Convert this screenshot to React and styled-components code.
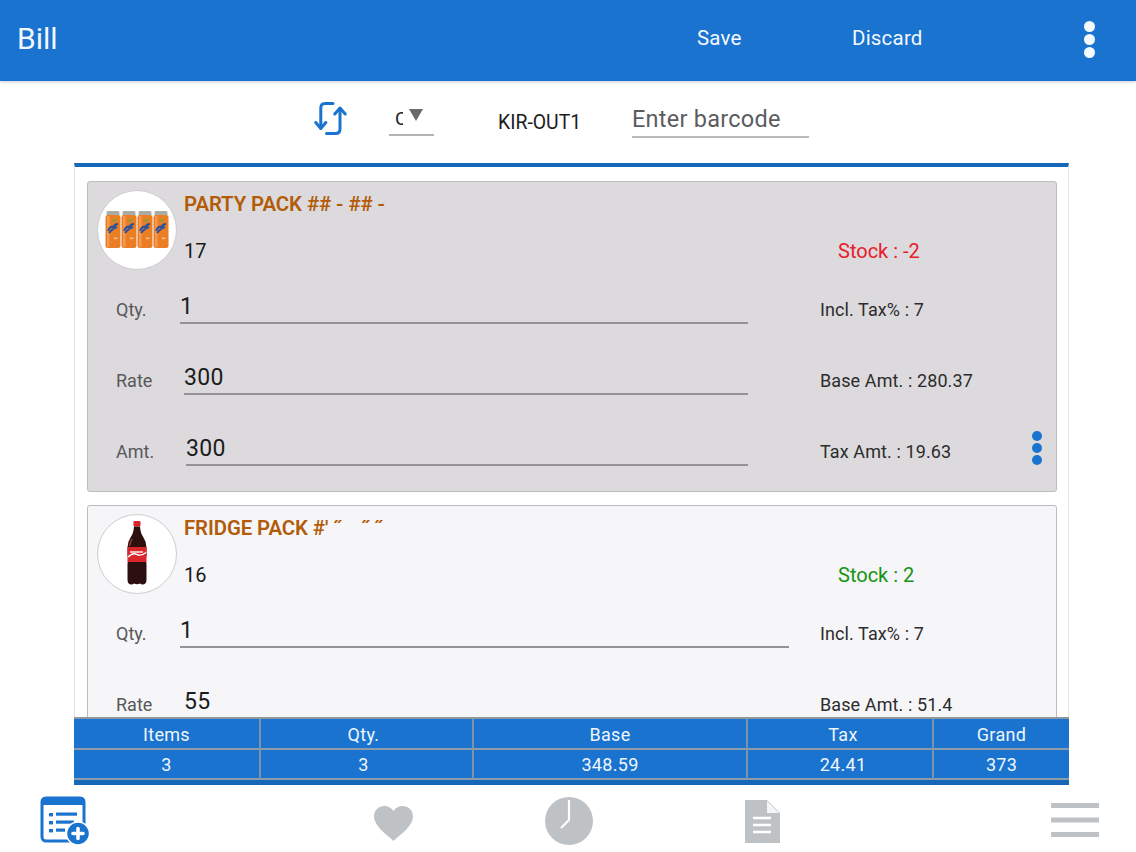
import React from "react";
import styled, { createGlobalStyle } from "styled-components";

const Global = createGlobalStyle`
  html, body { margin: 0; padding: 0; background: #fff; }
  body { font-family: Roboto, "Liberation Sans", sans-serif; }
  * { box-sizing: border-box; }
`;

const Page = styled.div`
  width: 1136px; height: 852px; display: flex; flex-direction: column; overflow: hidden; background: #fff;
`;
const Header = styled.header`
  flex: 0 0 81px; height: 81px; background: #1a73ce; color: #f2f8fe; display: flex; align-items: center;
  box-shadow: 0 1px 3px rgba(60, 90, 130, 0.3); position: relative; z-index: 2;
`;
const Title = styled.div`
  font-size: 30px; font-weight: 400; margin: -5px 0 0 17px; width: 680px;
`;
const HeaderAction = styled.div`
  font-size: 20.5px; width: ${(p) => p.$width}px; letter-spacing: 0.2px; margin-top: -6px;
`;
const Dots = styled.div`
  display: flex; flex-direction: column; gap: ${(p) => p.$gap}px; flex: none;
`;
const Dot = styled.span`
  display: block; width: ${(p) => p.$size}px; height: ${(p) => p.$size}px; border-radius: 50%; background: ${(p) => p.$color};
`;
const HeaderDots = styled(Dots)`
  margin-top: -3px;
`;
const Toolbar = styled.div`
  flex: 0 0 82px; display: flex; align-items: flex-start; padding-left: 314px;
`;
const SyncIcon = styled.svg`
  width: 33px; height: 35px; margin-top: 20px; flex: none;
`;
const Select = styled.div`
  width: 45px; height: 34px; margin: 21px 0 0 42px; border-bottom: 2px solid #b4b4b6; display: flex; flex: none;
  align-items: center;
`;
const SelectValue = styled.span`
  width: 8px; margin-left: 6px; overflow: hidden; font-size: 19px; color: #222; line-height: 22px; margin-top: 2px;
`;
const Caret = styled.span`
  margin-left: 6px; margin-top: -7px; width: 0; height: 0; border-left: 7px solid transparent; border-right: 7px solid transparent;
  border-top: 12px solid #6a6a6c;
`;
const Outlet = styled.div`
  font-size: 19.4px; color: #1c1c1c; margin: 30px 0 0 64px; width: 134px; line-height: 24px; flex: none;
`;
const Barcode = styled.div`
  width: 177px; height: 35px; margin-top: 20px; margin-top: 22px; border-bottom: 2px solid #bbbbbd; color: #5c5c5e; font-size: 23.5px;
  line-height: 33px; letter-spacing: 0.25px; flex: none;
`;
const List = styled.main`
  flex: 0 0 554px; height: 554px; width: 995px; margin-left: 74px; border-top: 4px solid #1667b8; border-left: 1px solid #dfe3e8;
  border-right: 1px solid #dfe3e8; padding: 14px 11px 0 12px; overflow: hidden; display: flex; flex-direction: column; gap: 13px;
  background: #fff;
`;
const Card = styled.article`
  flex: none; height: 311px; border: 1px solid #bcbcbe; border-radius: 3px; background: ${(p) => (p.$active ? "#dcdadd" : "#f6f5f8")};
`;
const CardTop = styled.div`
  height: 94px; display: flex; padding: 8px 0 0 9px;
`;
const Avatar = styled.div`
  width: 80px; height: 80px; border-radius: 50%; background: #fff; border: 1px solid #cdcdcf; display: flex; align-items: center;
  justify-content: center; flex: none;
`;
const Heading = styled.div`
  margin-left: 7px; flex: 1; margin-top: 1px;
`;
const Name = styled.div`
  font-size: 20.4px; font-weight: 600; line-height: 26px; color: #b25c0a; letter-spacing: -0.1px; white-space: pre;
`;
const SubRow = styled.div`
  display: flex; margin-top: 22px; font-size: 20px; line-height: 24px; color: #1a1a1a;
`;
const Code = styled.span`
  width: 654px;
`;
const Stock = styled.span`
  color: ${(p) => p.$color};
`;
const FieldRow = styled.div`
  height: 71px; display: flex; padding-left: 28px; position: relative;
`;
const Label = styled.div`
  flex: 0 0 64px; font-size: 18px; color: #58585a; line-height: 24px; padding-top: 22px;
`;
const Field = styled.div`
  flex: none; margin-left: ${(p) => p.$inset}px; width: ${(p) => p.$width}px; height: 48px; border-bottom: 2px solid #939395;
  font-size: 23px; color: #1c1c1c; line-height: 30px; padding-top: 16px; letter-spacing: 0.3px;
`;
const Side = styled.div`
  position: absolute; left: 732px; top: 22px; font-size: 18px; color: #2c2c2c; line-height: 24px; white-space: nowrap; letter-spacing: 0.1px;
`;
const CardDots = styled(Dots)`
  position: absolute; right: 14px; top: 13px;
`;
const Totals = styled.section`
  flex: 0 0 68px; width: 995px; margin-left: 74px; background: #1a73ce; color: #eef6fd; border-top: 2px solid #8d97a3;
  border-bottom: 5px solid #1667b8; position: relative; z-index: 1; display: grid; grid-template-columns: 187px 213px 274px 186px 135px;
  grid-template-rows: 31px 30px; font-size: 18px;
`;
const Cell = styled.div`
  display: flex; align-items: center; justify-content: center; border-right: ${(p) => (p.$last ? "0" : "2px solid #7b93ab")};
  border-bottom: 2px solid #8d9bab; line-height: 20px; letter-spacing: 0.3px; padding-top: 2px;
  transform: none;
`;
const CellText = styled.span`
  position: relative; left: ${(p) => p.$shift}px;
`;
const Nav = styled.nav`
  flex: 1; display: flex; align-items: flex-start; padding-left: 40px;
`;
const NavIcon = styled.svg`
  flex: none; margin-left: ${(p) => p.$gap}px; margin-top: ${(p) => p.$top}px;
`;

const Cans = () => (
  <svg width="64" height="38" viewBox="0 0 64 38">
    {[0, 16, 32, 48].map((x) => (
      <g key={x}>
        <rect x={x + 1.5} y="0" width="13" height="5" rx="1.5" fill="#a9aba6" />
        <rect x={x + 0.5} y="4" width="15" height="33" rx="2.5" fill="#ea7d26" />
        <rect x={x + 2} y="5" width="2.5" height="31" fill="#f4a25a" opacity="0.8" />
        <path d={`M${x + 3} 20 q2 -5 5 -4 q2 -3 5 -3 M${x + 4} 22 q4 -5 8 -6`} stroke="#25529f" strokeWidth="2" fill="none" />
        <circle cx={x + 9} cy="9.5" r="1.5" fill="#7aa83c" />
        <path d={`M${x + 9} 28 q2 -2 3 0`} stroke="#f7c08a" strokeWidth="1.5" fill="none" />
      </g>
    ))}
  </svg>
);

const Bottle = () => (
  <svg width="20" height="66" viewBox="0 0 20 66">
    <rect x="6.5" y="0" width="7" height="5.5" rx="1" fill="#d8232a" />
    <path d="M7 5.5 h6 q.5 7 3.5 11 q3 4.5 3 10 v8 l-1 4 l1 4 v16 q0 5 -4 5 q-1.5 0 -2.5 -1 q-3 1.5 -6 0 q-1 1 -2.5 1 q-4 0 -4 -5 v-16 l1 -4 l-1 -4 v-8 q0 -5.5 3 -10 q3 -4 3.5 -11z" fill="#2e0f0f" />
    <path d="M5 18 q-2 4 -2.5 7" stroke="#8a3a34" strokeWidth="1.6" fill="none" />
    <rect x="0.5" y="26" width="19" height="15" fill="#d9262c" />
    <path d="M1 36 q5 -5 9 -2.5 q4 2 9 -2" stroke="#fff" strokeWidth="1.4" fill="none" />
    <path d="M3 31 h13" stroke="#f6c9c9" strokeWidth="1.8" />
  </svg>
);

const rows1 = [
  { label: "Qty.", inset: 0, width: 568, value: "1", side: "Incl. Tax% : 7" },
  { label: "Rate", inset: 4, width: 564, value: "300", side: "Base Amt. : 280.37" },
  { label: "Amt.", inset: 6, width: 562, value: "300", side: "Tax Amt. : 19.63", dots: true },
];
const rows2 = [
  { label: "Qty.", inset: 0, width: 609, value: "1", side: "Incl. Tax% : 7" },
  { label: "Rate", inset: 4, width: 605, value: "55", side: "Base Amt. : 51.4" },
];

const ProductCard = ({ active, image, name, code, stock, stockColor, rows }) => (
  <Card $active={active}>
    <CardTop>
      <Avatar>{image}</Avatar>
      <Heading>
        <Name>{name}</Name>
        <SubRow>
          <Code>{code}</Code>
          <Stock $color={stockColor}>{stock}</Stock>
        </SubRow>
      </Heading>
    </CardTop>
    {rows.map((r) => (
      <FieldRow key={r.label}>
        <Label>{r.label}</Label>
        <Field $inset={r.inset} $width={r.width}>{r.value}</Field>
        <Side>{r.side}</Side>
        {r.dots && (
          <CardDots $gap={2}>
            <Dot $size={10} $color="#1a73ce" />
            <Dot $size={10} $color="#1a73ce" />
            <Dot $size={10} $color="#1a73ce" />
          </CardDots>
        )}
      </FieldRow>
    ))}
  </Card>
);

const totals = [
  ["Items", "3", 0],
  ["Qty.", "3", -3],
  ["Base", "348.59", 0],
  ["Tax", "24.41", 3],
  ["Grand", "373", 0],
];

export default function App() {
  return (
    <Page>
      <Global />
      <Header>
        <Title>Bill</Title>
        <HeaderAction $width={155}>Save</HeaderAction>
        <HeaderAction $width={232}>Discard</HeaderAction>
        <HeaderDots $gap={2}>
          <Dot $size={11} $color="#f4f9fe" />
          <Dot $size={11} $color="#f4f9fe" />
          <Dot $size={11} $color="#f4f9fe" />
        </HeaderDots>
      </Header>
      <Toolbar>
        <SyncIcon viewBox="0 0 33 35" fill="none" stroke="#1a73ce" strokeWidth="3" strokeLinecap="round" strokeLinejoin="round">
          <path d="M19 2.5 H11 Q6.8 2.5 6.8 7 V27" />
          <path d="M1.8 21.5 L6.8 27.5 L11.8 21.5" />
          <path d="M12.5 32.5 H21.5 Q26 32.5 26 28 V8" />
          <path d="M20.8 13 L26 7 L31.2 13" />
        </SyncIcon>
        <Select>
          <SelectValue>C</SelectValue>
          <Caret />
        </Select>
        <Outlet>KIR-OUT1</Outlet>
        <Barcode>Enter barcode</Barcode>
      </Toolbar>
      <List>
        <ProductCard active image={<Cans />} name="PARTY PACK ## - ## -" code="17" stock="Stock : -2" stockColor="#e8202a" rows={rows1} />
        <ProductCard image={<Bottle />} name={"FRIDGE PACK #' \u02dd    \u02dd \u02dd"} code="16" stock="Stock : 2" stockColor="#149414" rows={rows2} />
      </List>
      <Totals>
        {totals.map(([h, , s], i) => (
          <Cell key={h} $last={i === 4}><CellText $shift={s}>{h}</CellText></Cell>
        ))}
        {totals.map(([h, v, s], i) => (
          <Cell key={h + "v"} $last={i === 4}><CellText $shift={s}>{v}</CellText></Cell>
        ))}
      </Totals>
      <Nav>
        <NavIcon $gap={0} $top={11} width="50" height="50" viewBox="0 0 50 50" fill="none">
          <rect x="2" y="2" width="42" height="43" rx="4" stroke="#1a73ce" strokeWidth="3" />
          <path d="M2 4 a3 3 0 0 1 3 -2 H41 a3 3 0 0 1 3 2 V8 H2z" fill="#1a73ce" stroke="#1a73ce" strokeWidth="2" />
          <g fill="#1a73ce">
            <rect x="9" y="17" width="4" height="3.4" />
            <rect x="9" y="25" width="4" height="3.4" />
            <rect x="9" y="33" width="4" height="3.4" />
            <rect x="16" y="16.5" width="21" height="3.2" />
            <rect x="16" y="24.5" width="18" height="3.2" />
            <rect x="16" y="32.5" width="9" height="3.2" />
          </g>
          <circle cx="38" cy="37.5" r="11.5" fill="#1a73ce" stroke="#fff" strokeWidth="1.5" />
          <path d="M38 32.5 V42.5 M33 37.5 H43" stroke="#fff" strokeWidth="3.6" strokeLinecap="round" />
        </NavIcon>
        <NavIcon $gap={284} $top={21} width="39" height="35" viewBox="0 0 39 35">
          <path d="M19.5 35 C12 28 0 20 0 10.5 C0 4 5 0 10.5 0 C14.5 0 17.8 2 19.5 5 C21.2 2 24.5 0 28.5 0 C34 0 39 4 39 10.5 C39 20 27 28 19.5 35z" fill="#bfc2c5" />
        </NavIcon>
        <NavIcon $gap={132} $top={12} width="48" height="48" viewBox="0 0 48 48">
          <circle cx="24" cy="24" r="24" fill="#bfc2c5" />
          <path d="M24 3 V23 L16 31" stroke="#fff" strokeWidth="2.2" fill="none" strokeLinejoin="round" />
        </NavIcon>
        <NavIcon $gap={152} $top={15} width="35" height="43" viewBox="0 0 35 43">
          <path d="M0 0 H22 L35 13 V43 H0z" fill="#bfc2c5" />
          <path d="M22 1 L34 13 H22z" fill="#f4f5f6" />
          <path d="M8 18 H26 M8 25 H26 M8 32 H26" stroke="#fff" strokeWidth="2.4" />
        </NavIcon>
        <NavIcon $gap={271} $top={18} width="48" height="34" viewBox="0 0 48 34">
          <path d="M0 2.5 H48 M0 17 H48 M0 31.5 H48" stroke="#bfc2c5" strokeWidth="5" />
        </NavIcon>
      </Nav>
    </Page>
  );
}
